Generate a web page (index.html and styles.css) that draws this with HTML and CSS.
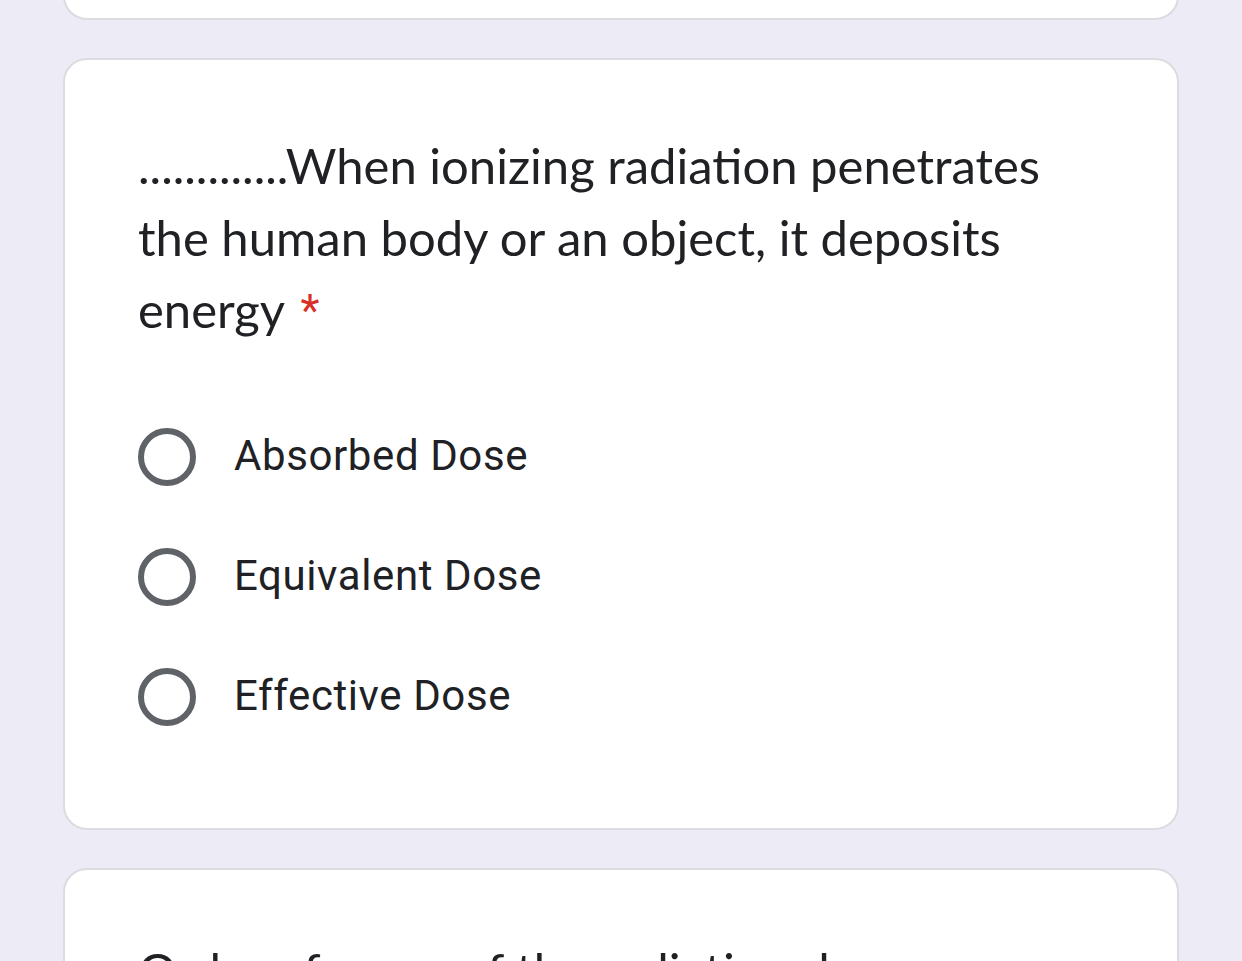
FILE: index.html
```html
<!DOCTYPE html>
<html lang="en">
<head>
<meta charset="utf-8">
<title>Form</title>
<link rel="stylesheet" href="styles.css">
</head>
<body>
<main class="page">
  <section class="card card-prev"></section>
  <section class="card question-card">
    <h2 class="question">.............When ionizing radiation penetrates the human body or an object, it deposits energy <span class="req">*</span></h2>
    <div class="options">
      <label class="option"><span class="radio"></span><span class="opt-text">Absorbed Dose</span></label>
      <label class="option"><span class="radio"></span><span class="opt-text">Equivalent Dose</span></label>
      <label class="option"><span class="radio"></span><span class="opt-text">Effective Dose</span></label>
    </div>
  </section>
  <section class="card question-card next-card">
    <h2 class="question">Order of some of the radiation doses</h2>
  </section>
</main>
</body>
</html>
```

FILE: styles.css
```css
html, body {
  margin: 0;
  padding: 0;
  background: #edebf6;
  height: 100%;
  overflow: hidden;
}
.page {
  width: 1116px;
  margin: 0 0 0 63px;
  display: flex;
  flex-direction: column;
  gap: 38px;
}
.card {
  background: #ffffff;
  border: 2px solid #dadce0;
  border-radius: 24px;
  box-sizing: border-box;
}
.card-prev {
  height: 200px;
  margin-top: -180px;
}
.question-card {
  padding: 69px 73px 71px 73px;
}
.next-card {
  padding-top: 64px;
}
.question {
  margin: 0;
  font-family: Lato, "Open Sans", sans-serif;
  font-weight: 400;
  font-size: 49px;
  line-height: 72px;
  color: #202124;
  width: 940px;
}
.req {
  color: #d93025;
  font-family: Roboto, sans-serif;
  font-size: 44px;
  vertical-align: 2px;
  margin-left: 4px;
}
.options {
  margin-top: 50px;
  display: flex;
  flex-direction: column;
}
.option {
  display: flex;
  align-items: center;
  height: 120px;
  gap: 38px;
}
.radio {
  width: 58px;
  height: 58px;
  box-sizing: border-box;
  border: 6px solid #5f6368;
  border-radius: 50%;
  flex: none;
}
.opt-text {
  font-family: Roboto, sans-serif;
  font-size: 42px;
  color: #202124;
  letter-spacing: 0.6px;
  margin-top: -4px;
}
```
